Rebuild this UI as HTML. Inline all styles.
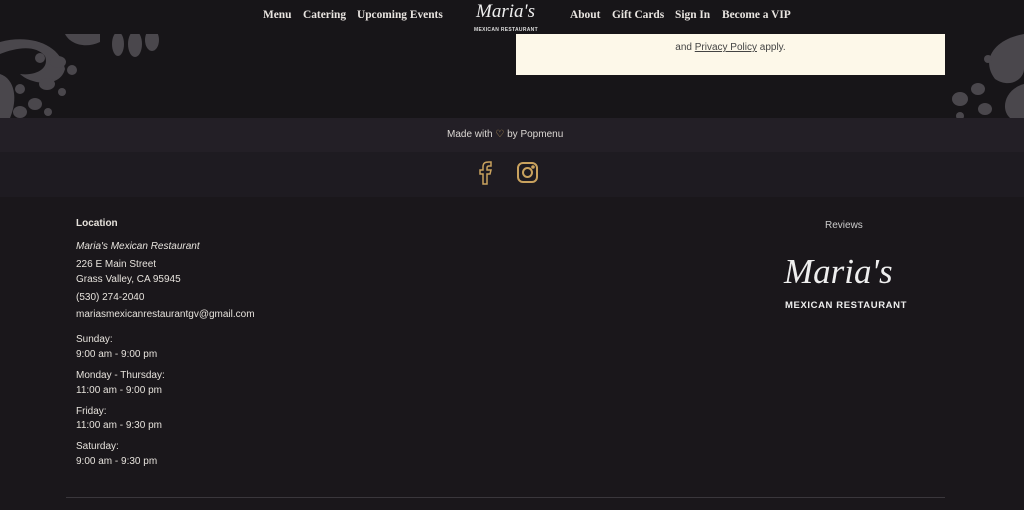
<!DOCTYPE html>
<html><head><meta charset="utf-8"><style>
*{margin:0;padding:0;box-sizing:border-box}
body{width:1024px;height:510px;overflow:hidden;background:#1a171b;font-family:"Liberation Sans",sans-serif;position:relative}
.abs{position:absolute}
.nav{font-family:"Liberation Serif",serif;font-weight:bold;font-size:11.4px;color:#e8e4e0;top:9px}
.t{color:#e6e2dc;font-size:10px;left:76px}
</style></head><body>
<div class="abs" style="left:0;top:0;width:1024px;height:118px;background:#171518"></div>
<svg class="abs" style="left:0;top:34px" width="180" height="84" fill="#4a474c">
<path d="M0 8 C30 0 60 10 65 35 C60 55 30 50 20 40 C35 42 50 35 45 22 C35 10 15 14 0 20Z"/>
<path d="M0 40 C15 45 18 65 10 84 L0 84Z" />
<circle cx="40" cy="24" r="5"/><circle cx="20" cy="55" r="5"/><circle cx="72" cy="36" r="5"/><circle cx="62" cy="58" r="4"/><circle cx="48" cy="78" r="4"/>
<ellipse cx="58" cy="28" rx="8" ry="6"/><ellipse cx="47" cy="50" rx="8" ry="6"/><ellipse cx="35" cy="70" rx="7" ry="6"/><ellipse cx="20" cy="78" rx="7" ry="6"/>
<path d="M65 0 C70 10 85 15 100 8 L100 0Z"/>
<ellipse cx="118" cy="10" rx="6" ry="12"/><ellipse cx="135" cy="10" rx="7" ry="13"/><ellipse cx="152" cy="6" rx="7" ry="11"/>
</svg>
<svg class="abs" style="left:940px;top:34px" width="84" height="84" fill="#4a474c">
<path d="M84 0 C55 5 40 25 55 45 C70 55 84 45 84 35Z"/>
<circle cx="48" cy="25" r="4"/><ellipse cx="20" cy="65" rx="8" ry="7"/><ellipse cx="38" cy="55" rx="7" ry="6"/><circle cx="20" cy="82" r="4"/><ellipse cx="45" cy="75" rx="7" ry="6"/>
<path d="M84 50 C65 55 60 75 70 84 L84 84Z"/>
</svg>
<div class="abs" style="left:516px;top:34px;width:429px;height:41px;background:#fdf8e9"></div>
<div class="abs" style="left:516px;top:42px;width:429px;text-align:center;font-size:10px;color:#444">and <span style="text-decoration:underline">Privacy Policy</span> apply.</div>
<div class="abs" style="left:0;top:0;width:1024px;height:34px;background:#171518"></div>
<div class="abs nav" style="left:263px">Menu</div>
<div class="abs nav" style="left:303px">Catering</div>
<div class="abs nav" style="left:357px">Upcoming Events</div>
<div class="abs nav" style="left:570px">About</div>
<div class="abs nav" style="left:612px">Gift Cards</div>
<div class="abs nav" style="left:675px">Sign In</div>
<div class="abs nav" style="left:722px">Become a VIP</div>
<div class="abs" style="left:476px;top:1px;font-family:'Liberation Serif',serif;font-style:italic;font-size:19px;color:#eee">Maria's</div>
<div class="abs" style="left:474px;top:27px;font-size:5px;font-weight:bold;color:#ddd;letter-spacing:.3px">MEXICAN RESTAURANT</div>
<div class="abs" style="left:0;top:118px;width:1024px;height:34px;background:#231f26"></div>
<div class="abs" style="left:0;top:152px;width:1024px;height:45px;background:#1e1b21"></div>
<div class="abs" style="left:447px;top:129px;font-size:10px;color:#dcd8d4">Made with <span style="color:#c9a25e">♡</span> by Popmenu</div>
<svg class="abs" style="left:476px;top:160px" width="20" height="26" fill="none" stroke="#c9a25e" stroke-width="1.5"><path d="M7 24 V14 H4 V10 H7 V7 C7 3 9 2 13 2 H15 V6 H13 C11.5 6 11 7 11 8 V10 H15 L14 14 H11 V24Z"/></svg>
<svg class="abs" style="left:516px;top:161px" width="24" height="24" fill="none" stroke="#c9a25e" stroke-width="2"><rect x="2" y="2" width="19" height="19" rx="5"/><circle cx="11.5" cy="11.5" r="4.5"/><circle cx="17" cy="6" r=".8" fill="#c9a25e"/></svg>
<div class="abs t" style="top:218px;font-weight:bold">Location</div>
<div class="abs t" style="top:241px;font-style:italic">Maria's Mexican Restaurant</div>
<div class="abs t" style="top:259px">226 E Main Street</div>
<div class="abs t" style="top:274px">Grass Valley, CA 95945</div>
<div class="abs t" style="top:292px">(530) 274-2040</div>
<div class="abs t" style="top:309px">mariasmexicanrestaurantgv@gmail.com</div>
<div class="abs t" style="top:334px">Sunday:</div>
<div class="abs t" style="top:349px">9:00 am - 9:00 pm</div>
<div class="abs t" style="top:370px">Monday - Thursday:</div>
<div class="abs t" style="top:385px">11:00 am - 9:00 pm</div>
<div class="abs t" style="top:406px">Friday:</div>
<div class="abs t" style="top:420px">11:00 am - 9:30 pm</div>
<div class="abs t" style="top:441px">Saturday:</div>
<div class="abs t" style="top:456px">9:00 am - 9:30 pm</div>
<div class="abs" style="left:825px;top:220px;font-size:10px;color:#ccc">Reviews</div>
<div class="abs" style="left:784px;top:254px;font-family:'Liberation Serif',serif;font-style:italic;font-size:35px;color:#eee;line-height:1">Maria's</div>
<div class="abs" style="left:785px;top:300px;font-size:9.5px;font-weight:bold;color:#eee;letter-spacing:.6px">MEXICAN RESTAURANT</div>
<div class="abs" style="left:66px;top:497px;width:879px;height:1px;background:#3a373c"></div>
</body></html>
